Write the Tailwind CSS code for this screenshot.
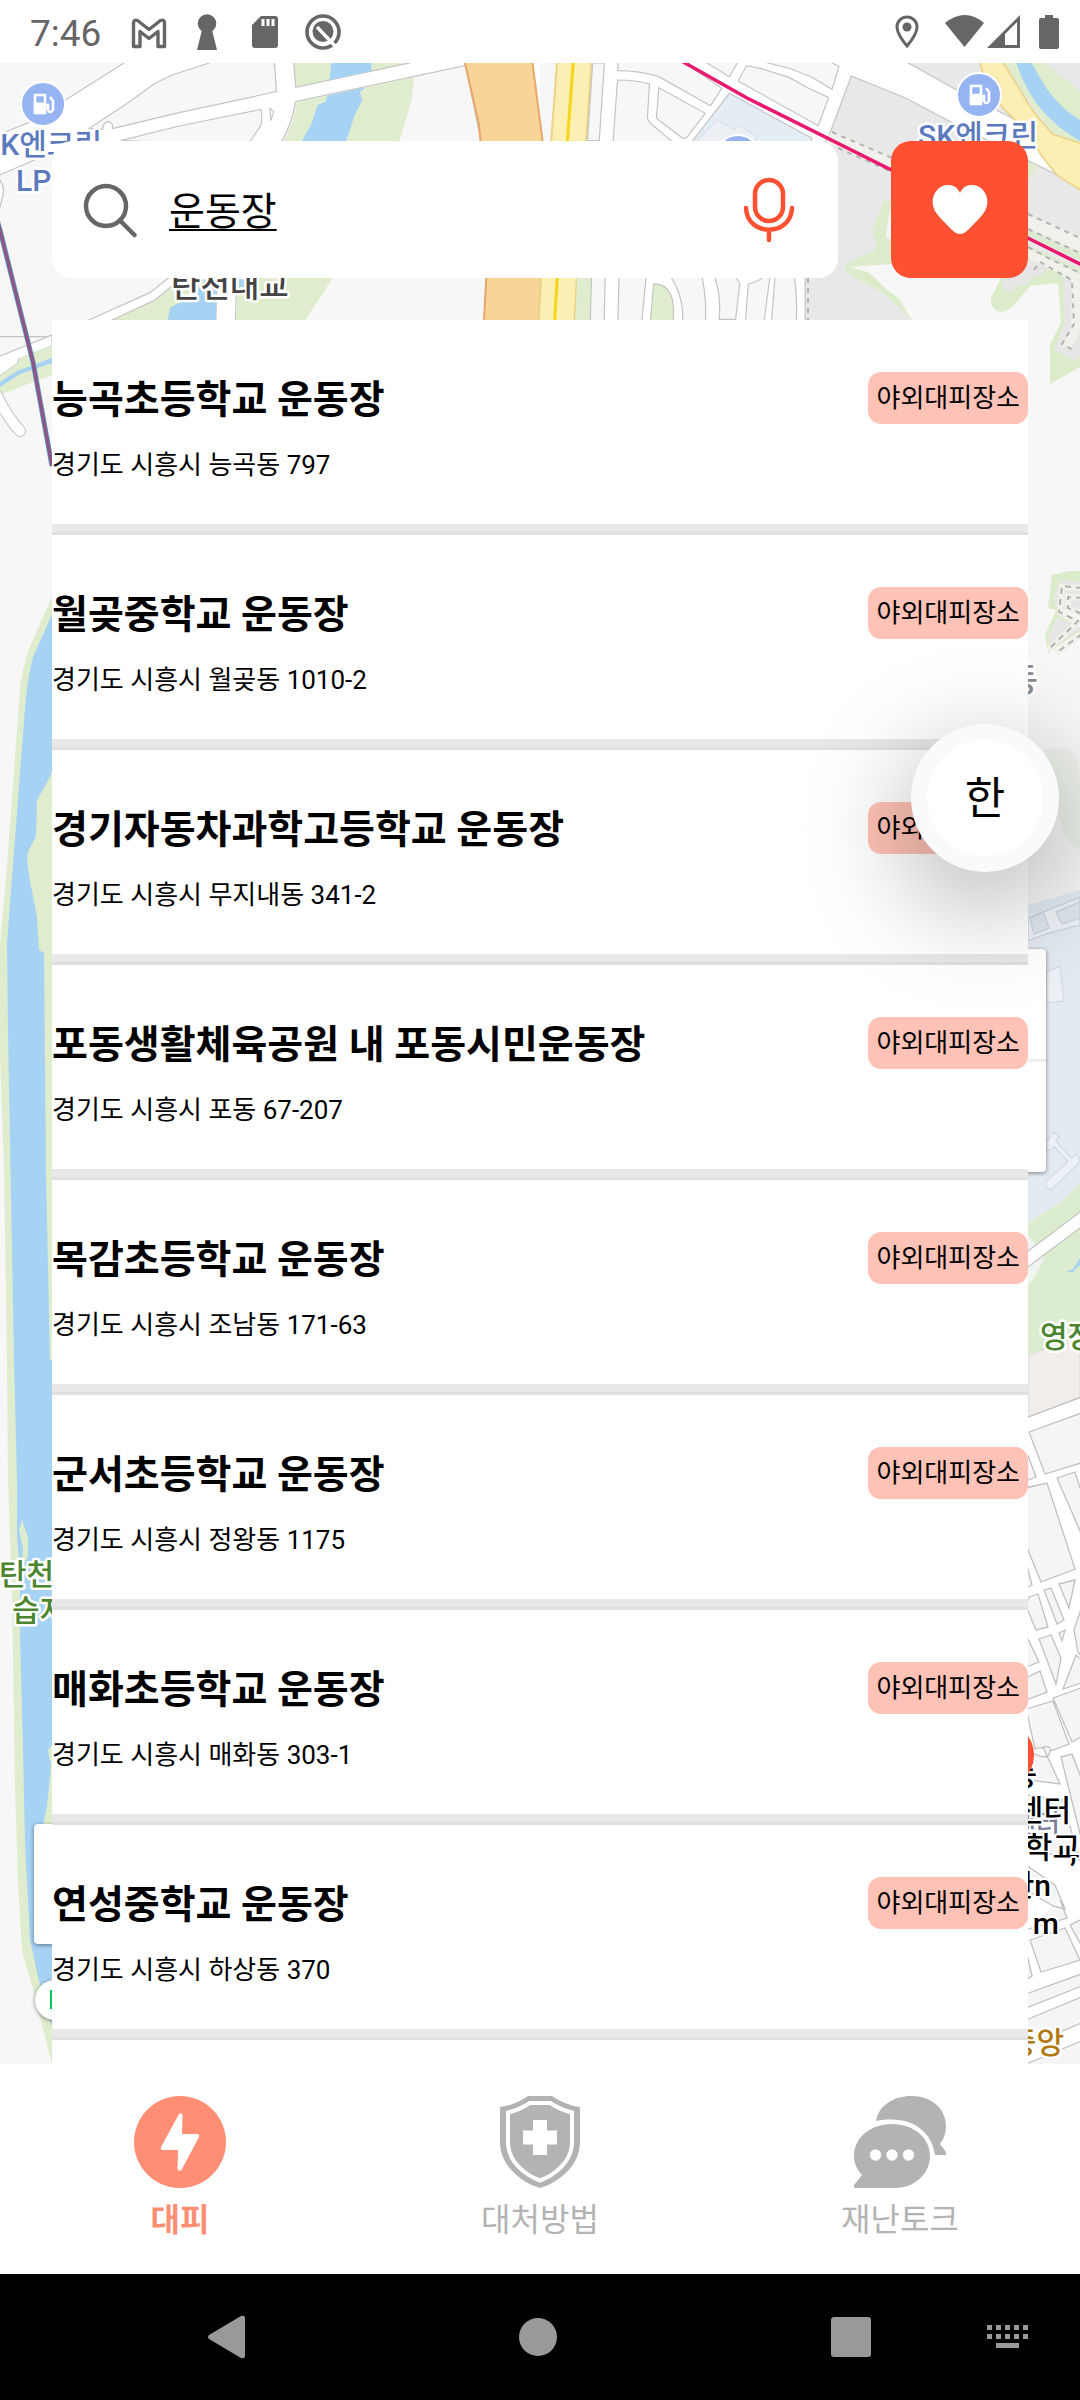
<!DOCTYPE html>
<html lang="ko">
<head>
<meta charset="utf-8">
<meta name="viewport" content="width=device-width, initial-scale=1">
<title>대피</title>
<script src="https://cdn.jsdelivr.net/npm/@tailwindcss/browser@4"></script>
</head>
<body class="flex h-screen flex-col overflow-hidden bg-white font-[Roboto,'Noto_Sans_CJK_KR',sans-serif] text-black">

<!-- Status bar -->
<header class="flex h-[63px] shrink-0 items-center justify-between bg-white pr-[13px] pl-[30px] text-[#666]">
  <div class="flex items-center gap-[22px]">
    <span class="mr-2 pt-1 text-[37px] leading-none">7:46</span>
    <svg class="h-10 w-9" viewBox="0 0 36 40" fill="none" stroke="currentColor" stroke-width="3.400" stroke-linejoin="round"><path d="M2.500 34.500V11Q3 7 6.500 8.500L18 17.500L29.500 8.500Q33.500 7 33.500 11V34.500H27V19.500L18 26.500L9 19.500V34.500Z"/></svg>
    <svg class="h-10 w-9" viewBox="0 0 36 40" fill="currentColor"><circle cx="18" cy="11.500" r="9.300"/><path d="M13 18H23L28 38H8Z"/></svg>
    <svg class="h-10 w-9" viewBox="0 0 36 40" fill="currentColor" fill-rule="evenodd"><path d="M14 4H28Q31 4 31 7V33Q31 36 28 36H8Q5 36 5 33V13ZM14.500 7V14H17.500V7ZM19.500 7V14H22.500V7ZM24.500 7V14H27.500V7Z"/></svg>
    <svg class="h-10 w-9" viewBox="0 0 36 40" fill="none" stroke="currentColor"><circle cx="18" cy="20" r="16" stroke-width="3.600"/><circle cx="18" cy="19.500" r="10.500" fill="currentColor" stroke="none"/><path d="M12 15L31 35" stroke="#fff" stroke-width="3.400"/></svg>
  </div>
  <div class="flex items-center">
    <svg class="mr-5 h-9 w-9" viewBox="0 0 36 36" fill="none" stroke="currentColor" stroke-width="3"><path d="M18 32C13 26 8 19 8 13A10 10 0 0 1 28 13C28 19 23 26 18 32Z"/><circle cx="18" cy="13" r="4.500" fill="currentColor" stroke="none"/></svg>
    <svg class="h-9 w-10" viewBox="0 0 40 36" fill="currentColor"><path d="M0 9Q20 -7 39 9L19.500 33Z"/></svg>
    <svg class="mr-[10px] ml-[2px] h-9 w-[34px]" viewBox="0 0 34 36" fill="currentColor" fill-rule="evenodd"><path d="M0 34L33 1V34ZM18 20V31H30V8Z"/></svg>
    <svg class="h-9 w-9" viewBox="0 0 36 36" fill="currentColor"><path d="M14 1H22V4H26Q28 4 28 6V33Q28 35 26 35H10Q8 35 8 33V6Q8 4 10 4H14Z"/></svg>
  </div>
</header>

<main class="relative flex min-h-0 flex-1 flex-col overflow-hidden bg-[#f7f7f7] px-[52px] pt-[78px]">

  <!-- Map -->
  <svg class="absolute inset-0 h-full w-full" viewBox="0 63 1080 2001" preserveAspectRatio="xMidYMin slice" aria-hidden="true">
    <rect y="63" width="1080" height="2001" fill="#f7f7f7"/>

    <!-- north west -->
    <g transform="scale(.3444 .3333)">
      <rect y="189" width="1568" height="771" fill="#fff"/>
      <g fill="#f7f7f7" stroke="#c4c4c4" stroke-width="3.500">
        <path d="M-9 180H374L190 300L90 365L-9 406Z"/>
        <path d="M634 180L500 225L450 250L370 310L260 385L298 388Q300 365 315 365Q330 368 326 386L520 338L803 275L796 180Z"/>
        <path d="M350 422L520 378L758 328Q764 365 755 380L720 435Z"/>
        <path d="M784 325L795 335L786 362Z"/>
        <path d="M-9 529L100 480L160 455L300 600L520 780V815L482 840L435 878L258 960L170 1010H-9Z"/>
        <path d="M-9 530Q20 560 5 600L-9 660" fill="#fff"/>
        <path d="M852 180L859 262L1230 180Z" fill="#dfedce"/>
        <path d="M858 305L1352 196L1400 440H810Q850 370 858 305Z"/>
        <path d="M325 960L450 900L520 840V780H632L626 970Z" fill="#dfedce"/>
        <path d="M690 780L683 970H1420V780Z"/>
      </g>
      <path d="M862 306L1203 231L1195 300L1155 440H815Q855 370 862 306ZM692 820L685 970H880L975 820Z" fill="#dfedce"/>
      <path d="M962 189L957 240L1078 213V189ZM950 287L1062 262L1045 275L1052 300L1030 345L1000 440H868L905 370L922 315L945 305ZM485 970L495 922L560 890L600 830H628V970ZM694 823H710V860L694 865Z" fill="#a6d2f3"/>
      <path d="M1348 180L1390 370L1395 420L1412 833L1405 970H1566L1572 833L1575 420L1545 180Z" fill="#f8d499" stroke="#e6a86e" stroke-width="6"/>
    </g>

    <!-- north east -->
    <g transform="translate(540) scale(.3444 .3333)">
      <rect x="150" y="189" width="1430" height="771" fill="#fff"/>
      <path d="M50 180L3 833L-4 970H100L107 833L150 180Z" fill="#fcefb4" stroke="#ecd28a" stroke-width="6"/>
      <path d="M97 180L50 833L42 970" fill="none" stroke="#f4d71c" stroke-width="9"/>
      <path d="M108 833H150L145 970H102Z" fill="#dfedce"/>
      <g fill="#f7f7f7" stroke="#c4c4c4" stroke-width="3.500">
        <path d="M153 189L138 422H172L187 189Z"/>
        <path d="M226 180V212Q290 212 345 230L495 317L528 265L410 180Z"/>
        <path d="M225 240Q280 240 318 252L312 350Q312 365 330 378L390 430H212Z"/>
        <path d="M345 263L480 340L428 410Q420 420 410 412L338 355Z"/>
        <path d="M470 180L550 230L578 180Z"/>
        <path d="M600 197L575 243L808 377L838 293L780 265L725 233L640 205Z"/>
        <path d="M640 183L730 207L790 232L848 268L868 200L835 180Z"/>
        <path d="M150 810H190L186 970H146ZM230 810L226 970H295L310 810Z"/>
        <path d="M330 852Q370 850 385 900Q390 940 386 970H320Z" fill="#dfedce"/>
        <path d="M365 810Q420 880 414 970H480Q485 880 465 810ZM500 810Q528 880 520 958H568L580 850L555 810ZM670 810Q640 845 605 852L596 970H650ZM684 810L672 970H744Q748 880 735 810Z"/>
        <path d="M550 280L790 415L780 440H430Z" fill="#e4ecf4"/>
        <path d="M904 228L1060 293L1200 370L1430 488L1600 575V1000H770V780H820V440L838 410Z" fill="#e8e8e8"/>
        <path d="M1050 178L1210 270L1400 370L1600 450V180Z" fill="#e8e8e8"/>
      </g>
      <path d="M515 358L563 390L578 377L632 412L610 430H450Z" fill="#ecf0f5" stroke="#d6dfe8" stroke-width="3"/>
      <path d="M1340 180L1435 325L1490 400L1568 430H1600V300L1455 180Z" fill="#dfedce"/>
      <path d="M1380 180Q1410 280 1470 345Q1520 400 1600 440V375Q1530 350 1470 265L1422 180Z" fill="#a6d2f3"/>
      <path d="M1276 180Q1300 290 1380 360Q1430 420 1455 465L1500 525L1600 590V440L1490 403Q1430 340 1400 280L1340 180Z" fill="#fcefb4" stroke="#ecd28a" stroke-width="5"/>
      <path d="M1420 485L1447 500L1410 550Z" fill="#dfedce"/>
    </g>

    <!-- park and railway -->
    <path d="M895 201H884L872 230L877 245L874 251L850 262Q840 268 850 275L885 294L903 312L923 330H1050V384L1080 367V285L1062 272L1000 260Z" fill="#dcebca"/>
    <path d="M895 206L890 210L886 236L895 244ZM850 267L891 264L1001 264L1001 278L991 298Q990 310 1001 312Q1008 311 1013 306L1030 286L1058 283L1061 322L1050 345L1033 384L1028 392V330H923L909 316L900 300L885 288L870 273Z" fill="#f7f7f7"/>
    <path d="M1063 276L1080 280V354L1076 361L1054 351L1064 322ZM1004 280L1002 288L1009 293L1014 291L1016 285L1024 286L1034 276L1042 275L1050 264L1030 255Z" fill="#e6e6e6"/>
    <path d="M829 136L890 164L1030 222L1084 246" fill="none" stroke="#f2f0ea" stroke-width="13"/>
    <path d="M1026 232L1084 259M1026 248L1084 274" fill="none" stroke="#dcebd0" stroke-width="6"/>
    <path d="M1024 252L1042 260L1076 277V330L1066 348" fill="none" stroke="#f2f0ea" stroke-width="9"/>
    <path d="M832 132L892 158M838 148L890 171M1028 214L1084 240M1028 229L1084 255M1028 247L1050 259L1082 274M1034 270L1040 262L1072 280L1074 324L1062 344L1073 350M808 278V330" fill="none" stroke="#b3b3b3" stroke-width="2" stroke-dasharray="5 5"/>
    <path d="M678 59L747 98L1084 266" fill="none" stroke="#e8196f" stroke-width="3.500"/>

    <!-- west side: stream, river and railway -->
    <path d="M-2 357L52 335V346L19 359L17 364L-2 377Z" fill="#fff" stroke="#c4c4c4" stroke-width="1.200"/>
    <path d="M0 376L17 364L20 358L52 346V375L20 387L0 395Z" fill="#dfedce"/>
    <path d="M0 382L17 371L52 358V363L20 374L0 387Z" fill="#a6d2f3"/>
    <path d="M-3 396Q8 418 20 431" fill="none" stroke="#c4c4c4" stroke-width="12" stroke-linecap="round"/>
    <path d="M-3 396Q8 418 20 431" fill="none" stroke="#fff" stroke-width="10" stroke-linecap="round"/>
    <path d="M-3 220L0 230L24 326L33 362L52 466" fill="none" stroke="#5f9dc0" stroke-width="5"/>
    <path d="M-3 220L0 230L24 326L33 362L52 466" fill="none" stroke="#8a5788" stroke-width="3.500"/>
    <path d="M54 592L29 649Q22 670 20 688L7 866L0 945V1055L4 1172L7 1360L8 1480L12 1595L15 1786L18 1882L22 1951L33 1989L52 2064H56Z" fill="#dfedce"/>
    <path d="M54 610L33 657Q27 680 25 708L7 943L8 1034L14 1360L17 1480L17 1537L20 1570V1633L23 1748L25 1844L30 1939L38 1977L54 2034V1360H50L46 1172L44 953L39 950L37 917L30 881Q26 858 28 852L36 836L37 800L50 777L54 765Z" fill="#a6d2f3"/>
    <path d="M22 1520L28 1537V1557L22 1565L23 1548L19 1530ZM54 1742L48 1750L51 1765L47 1807L43 1825H54Z" fill="#dfedce"/>

    <!-- east side: hills, campus, park -->
    <g>
      <path d="M1052 575L1068 571H1082V590L1060 615L1082 630L1048 653L1045 635L1056 610L1048 608Z" fill="#dcebca"/>
      <path d="M1054 595L1060 580L1082 582V610L1055 606ZM1048 636L1057 618L1082 628L1052 648Z" fill="#e6e6e6"/>
      <path d="M1082 588L1062 587L1060 612L1078 622L1048 650M1082 598L1068 597V608L1082 614M1082 634L1056 653" fill="none" stroke="#f2f0ea" stroke-width="6"/>
      <path d="M1082 588L1062 586L1059 612L1078 621L1048 650M1082 598L1068 597V608L1082 614M1082 634L1056 653" fill="none" stroke="#b0b0b0" stroke-width="2" stroke-dasharray="6 5"/>
      <path d="M1045 750Q1070 745 1077 758L1080 780V850Q1062 840 1060 820Z" fill="#edf2ea"/>
      <path d="M1028 905L1080 890V1183L1060 1203L1028 1223Z" fill="#e2eaf2"/>
      <path d="M1028 918L1080 897V925L1046 934L1028 941Z" fill="#eef2f6" stroke="#cfd7df" stroke-width="1.500"/>
      <path d="M1030 918L1043 912L1049 928L1034 934ZM1056 912L1080 902V918L1062 924Z" fill="#dfe7ef" stroke="#cfd7df" stroke-width="1.500"/>
      <path d="M1046 972L1060 966L1064 1001L1046 1003ZM1046 1142L1054 1132L1059 1137L1056 1141L1071 1158L1077 1154L1080 1162L1051 1190L1046 1187V1181L1068 1162L1055 1147L1046 1152Z" fill="#edf1f5" stroke="#d5dde5" stroke-width="1.500"/>
      <path d="M1028 1223L1060 1203L1082 1181V1340L1028 1356Z" fill="#dcedcf"/>
      <path d="M1028 1235Q1040 1250 1044 1257Q1038 1275 1028 1285Z" fill="#f1f4f0"/>
      <path d="M1020 1265L1084 1217" stroke="#c4c4c4" stroke-width="14"/>
      <path d="M1020 1265L1084 1217" stroke="#fff" stroke-width="11.500"/>
      <path d="M1066 1272L1073 1269L1080 1258V1265L1073 1272Z" fill="#a6d2f3"/>
      <path d="M1028 1356L1080 1335V1398L1028 1418Z" fill="#f1edea" stroke="#ddd8d2" stroke-width="1"/>
      <path d="M1028 1418L1080 1398V2064H1028Z" fill="#fff"/>
    </g>
    <g fill="#f5f5f5" stroke="#c0c0c0" stroke-width="1.300">
      <path d="M1020 1420L1084 1396"/>
      <path d="M1029 1432L1084 1412V1462L1045 1474ZM1026 1450L1036 1477L1026 1481ZM1026 1488L1044 1484L1050 1500"/>
      <path d="M1026 1488L1047 1483L1075 1569L1041 1582L1026 1545ZM1057 1478L1075 1472L1084 1500V1540Z"/>
      <path d="M1026 1562L1032 1585L1026 1588ZM1029 1597L1038 1594L1048 1627L1036 1630L1026 1606ZM1044 1590L1051 1588L1064 1620L1057 1624ZM1059 1584L1075 1580L1069 1608ZM1039 1639L1051 1635L1061 1658L1056 1684ZM1059 1633L1065 1630L1062 1641ZM1026 1635L1039 1662L1026 1667ZM1026 1678L1040 1671L1047 1692L1026 1700Z"/>
      <path d="M1084 1600L1074 1630L1078 1652L1084 1660ZM1084 1662L1076 1655L1063 1689L1084 1682Z"/>
      <path d="M1026 1709L1053 1701L1069 1744L1050 1751Q1040 1746 1035 1749ZM1053 1698L1084 1687V1735L1072 1742Z"/>
      <path d="M1033 1753Q1048 1761 1050 1752Q1052 1745 1043 1747L1060 1784L1028 1780ZM1061 1757L1072 1754L1084 1785V1850ZM1026 1795L1062 1800L1080 1860L1030 1850Z"/>
      <path d="M1026 1865L1055 1885L1065 1909L1053 1906L1026 1890ZM1026 1930L1067 1918L1060 1900M1030 1940L1065 1928L1080 1960L1041 1972ZM1070 1925L1084 1918V1950Z"/>
      <path d="M1026 1950L1032 1976L1026 1980ZM1026 1994L1084 1973V1985L1026 2008ZM1026 2020L1084 1996V2022L1026 2046ZM1026 2064L1084 2040V2070H1026Z"/>
    </g>

    <!-- map cards -->
    <g style="filter:drop-shadow(0 1px 2px #0007)">
      <rect x="900" y="949" width="146" height="223" rx="4" fill="#fff"/>
      <rect x="34" y="1824" width="120" height="120" rx="4" fill="#fff"/>
      <circle cx="55" cy="2000" r="20" fill="#fff"/>
    </g>
    <path d="M900 1060.500H1046" stroke="#eee" stroke-width="3"/>
    <rect x="50" y="1990" width="10" height="19" fill="#03c75a"/>

    <!-- fuel stations -->
    <g stroke="#fff" stroke-width="2" fill="#97b4f2">
      <circle cx="43" cy="104" r="22"/><circle cx="979" cy="95" r="22"/><circle cx="738" cy="157" r="22"/>
    </g>
    <g fill="none" stroke="#fff" stroke-width="2.500">
      <path d="M35 113V95H45V113M35 104H45M50 97L53 101V110Q50 114 48 110V105H45"/><path d="M35 104H45V113H35Z" fill="#fff"/>
      <path d="M971 104V86H981V104M986 88L989 92V101Q986 105 984 101V96H981"/><path d="M971 95H981V104H971Z" fill="#fff"/>
    </g>

    <!-- place names -->
    <g font-size="30" font-weight="500" stroke="#fff" stroke-width="5" stroke-linejoin="round" paint-order="stroke">
      <g fill="#5d79bd">
        <text x="102" y="155" text-anchor="end">SK엔크린</text>
        <text x="16" y="191">LPG</text>
        <text x="1038" y="146" text-anchor="end">SK엔크린</text>
      </g>
      <text x="171" y="297" font-size="32" fill="#444">탄천대교</text>
      <g fill="#4c8530">
        <text x="-1" y="1585">탄천</text>
        <text x="12" y="1621">습지</text>
        <text x="1040" y="1347">영장</text>
      </g>
      <text x="1038" y="692" font-size="34" fill="#8c8c8c" text-anchor="end">동</text>
      <text x="1060" y="1833" font-size="26" fill="#7a8099" text-anchor="end">센터</text>
      <g fill="#000" stroke-width="4">
        <text x="1037" y="1785" text-anchor="end">동</text>
        <text x="1071" y="1821" text-anchor="end">센터</text>
        <text x="1080" y="1858" text-anchor="end">학교</text>
        <text x="1070" y="1861">,</text>
        <text x="1051" y="1896" text-anchor="end">한n</text>
        <text x="1059" y="1934" text-anchor="end">m</text>
      </g>
      <text x="1064" y="2053" fill="#b07a10" text-anchor="end">중앙</text>
    </g>
    <circle cx="1001" cy="1755" r="33" fill="#ff5032"/>
  </svg>

  <!-- Search -->
  <div class="relative flex h-[137px] shrink-0 gap-[53px]">
    <form class="flex min-w-0 flex-1 items-center rounded-[20px] bg-white pr-[43px] pl-[30px]">
      <svg class="h-14 w-14 shrink-0" viewBox="0 0 56 56" fill="none" stroke="#666" stroke-width="4.500" stroke-linecap="round"><circle cx="24" cy="24" r="20"/><path d="M38 38.500L52.500 53"/></svg>
      <input class="ml-[31px] min-w-0 flex-1 bg-transparent pt-1 text-[39px] leading-[56px] text-black underline decoration-2 underline-offset-4 outline-none [text-decoration-skip-ink:none]" type="text" value="운동장" aria-label="장소 검색">
      <button class="shrink-0" type="button" aria-label="음성 검색">
        <svg class="h-[66px] w-[52px]" viewBox="0 0 52 66" fill="none" stroke="#ff5032" stroke-width="4.500" stroke-linecap="round"><rect x="12" y="3" width="28" height="41" rx="14"/><path d="M3 31C4 60 48 60 49 31M26 54V63"/></svg>
      </button>
    </form>
    <button class="flex w-[137px] shrink-0 items-center justify-center rounded-[20px] bg-[#ff5032]" type="button" aria-label="즐겨찾기">
      <svg class="h-[50px] w-14" viewBox="0 0 56 50" fill="#fff"><path d="M28 8C32 -2 44 -2 50 4C57 11 57 21 51 29C47 34 41 40 36 45Q28 53 20 45C15 40 9 34 5 29C-1 21 -1 11 6 4C12 -2 24 -2 28 8Z"/></svg>
    </button>
  </div>

  <!-- Results -->
  <ul class="relative mt-[42px] min-h-0 flex-1 overflow-y-auto bg-white [scrollbar-width:none]">
    <li class="border-b-[3px] border-[#e0e0e0]"><div class="border-b-8 border-[#e8e8e8] pt-[52px] pb-[39px]">
      <div class="flex h-[52px] items-center justify-between"><h2 class="pt-1 text-[39px] leading-[52px] font-bold">능곡초등학교 운동장</h2><span class="rounded-[13px] bg-[#ffc2b6] px-2 text-[26px] leading-[52px]">야외대피장소</span></div>
      <p class="mt-[21px] text-[26px] leading-10">경기도 시흥시 능곡동 797</p>
    </div></li>
    <li class="border-b-[3px] border-[#e0e0e0]"><div class="border-b-8 border-[#e8e8e8] pt-[52px] pb-[39px]">
      <div class="flex h-[52px] items-center justify-between"><h2 class="pt-1 text-[39px] leading-[52px] font-bold">월곶중학교 운동장</h2><span class="rounded-[13px] bg-[#ffc2b6] px-2 text-[26px] leading-[52px]">야외대피장소</span></div>
      <p class="mt-[21px] text-[26px] leading-10">경기도 시흥시 월곶동 1010-2</p>
    </div></li>
    <li class="border-b-[3px] border-[#e0e0e0]"><div class="border-b-8 border-[#e8e8e8] pt-[52px] pb-[39px]">
      <div class="flex h-[52px] items-center justify-between"><h2 class="pt-1 text-[39px] leading-[52px] font-bold">경기자동차과학고등학교 운동장</h2><span class="rounded-[13px] bg-[#ffc2b6] px-2 text-[26px] leading-[52px]">야외대피장소</span></div>
      <p class="mt-[21px] text-[26px] leading-10">경기도 시흥시 무지내동 341-2</p>
    </div></li>
    <li class="border-b-[3px] border-[#e0e0e0]"><div class="border-b-8 border-[#e8e8e8] pt-[52px] pb-[39px]">
      <div class="flex h-[52px] items-center justify-between"><h2 class="pt-1 text-[39px] leading-[52px] font-bold">포동생활체육공원 내 포동시민운동장</h2><span class="rounded-[13px] bg-[#ffc2b6] px-2 text-[26px] leading-[52px]">야외대피장소</span></div>
      <p class="mt-[21px] text-[26px] leading-10">경기도 시흥시 포동 67-207</p>
    </div></li>
    <li class="border-b-[3px] border-[#e0e0e0]"><div class="border-b-8 border-[#e8e8e8] pt-[52px] pb-[39px]">
      <div class="flex h-[52px] items-center justify-between"><h2 class="pt-1 text-[39px] leading-[52px] font-bold">목감초등학교 운동장</h2><span class="rounded-[13px] bg-[#ffc2b6] px-2 text-[26px] leading-[52px]">야외대피장소</span></div>
      <p class="mt-[21px] text-[26px] leading-10">경기도 시흥시 조남동 171-63</p>
    </div></li>
    <li class="border-b-[3px] border-[#e0e0e0]"><div class="border-b-8 border-[#e8e8e8] pt-[52px] pb-[39px]">
      <div class="flex h-[52px] items-center justify-between"><h2 class="pt-1 text-[39px] leading-[52px] font-bold">군서초등학교 운동장</h2><span class="rounded-[13px] bg-[#ffc2b6] px-2 text-[26px] leading-[52px]">야외대피장소</span></div>
      <p class="mt-[21px] text-[26px] leading-10">경기도 시흥시 정왕동 1175</p>
    </div></li>
    <li class="border-b-[3px] border-[#e0e0e0]"><div class="border-b-8 border-[#e8e8e8] pt-[52px] pb-[39px]">
      <div class="flex h-[52px] items-center justify-between"><h2 class="pt-1 text-[39px] leading-[52px] font-bold">매화초등학교 운동장</h2><span class="rounded-[13px] bg-[#ffc2b6] px-2 text-[26px] leading-[52px]">야외대피장소</span></div>
      <p class="mt-[21px] text-[26px] leading-10">경기도 시흥시 매화동 303-1</p>
    </div></li>
    <li class="border-b-[3px] border-[#e0e0e0]"><div class="border-b-8 border-[#e8e8e8] pt-[52px] pb-[39px]">
      <div class="flex h-[52px] items-center justify-between"><h2 class="pt-1 text-[39px] leading-[52px] font-bold">연성중학교 운동장</h2><span class="rounded-[13px] bg-[#ffc2b6] px-2 text-[26px] leading-[52px]">야외대피장소</span></div>
      <p class="mt-[21px] text-[26px] leading-10">경기도 시흥시 하상동 370</p>
    </div></li>
  </ul>

  <!-- Floating keyboard language key -->
  <button class="absolute top-[661px] right-[21px] flex h-[148px] w-[148px] items-center justify-center rounded-full bg-[#f8fafc] shadow-[0_30px_100px_12px_rgba(0,0,0,0.25)]" type="button">
    <span class="flex h-[116px] w-[116px] items-center justify-center rounded-full bg-white pt-[2px] text-[44px] leading-none">한</span>
  </button>
</main>

<!-- Tabs -->
<nav class="grid h-[210px] shrink-0 grid-cols-3 bg-white pt-8 text-[32px] leading-[64px] text-[#b3b3b3]">
  <a class="flex flex-col items-center font-bold text-[#ff8e74]" href="#shelter">
    <svg class="h-[92px] w-[92px]" viewBox="0 0 92 92"><circle cx="46" cy="46" r="46" fill="currentColor"/><path d="M45 18Q48 16 48.500 19L48 38H63Q66 38 65 41L47.500 74Q44 76 43.500 73L44 54H28Q26 53 27 51Z" fill="#fff"/></svg>
    대피
  </a>
  <a class="flex flex-col items-center" href="#guide">
    <svg class="h-[92px] w-20" viewBox="0 0 80 92" fill="currentColor"><path d="M28 0H52Q65 9 80 11V46C80 72 55 88 40 92C25 88 0 72 0 46V11Q15 9 28 0Z"/><path d="M30 7H50Q61 14 72 16.500V48C71 67 53 80 40 84.500C27 80 9 67 8 48V16.500Q19 14 30 7Z" fill="none" stroke="#fff" stroke-width="4"/><path d="M33 24H47V34.500H57V48.500H47V59H33V48.500H23V34.500H33Z" fill="#fff"/></svg>
    대처방법
  </a>
  <a class="flex flex-col items-center" href="#talk">
    <svg class="h-[92px] w-[92px]" viewBox="0 0 92 92" fill="currentColor"><path d="M22 25C25 9 40 0 57 0C78 0 92 13 92 30Q92 40 86 48L92 56V59H81C78 36 58 18 22 25Z"/><path d="M38 28C60 28 76 42 76 60C76 78 60 92 42 92H0V89L8 79Q0 71 0 60C0 42 16 28 38 28Z"/><g fill="#fff"><circle cx="21.500" cy="59" r="5.700"/><circle cx="38" cy="59" r="5.700"/><circle cx="54.500" cy="59" r="5.700"/></g></svg>
    재난토크
  </a>
</nav>

<!-- System navigation -->
<footer class="flex h-[126px] shrink-0 items-center bg-black pr-[52px] text-[#999]">
  <button class="ml-[20%]" type="button" aria-label="뒤로"><svg class="h-11 w-10" viewBox="0 0 40 44" fill="currentColor"><path d="M3 20Q1 22 3 24L35 43Q39 44 39 41V3Q39 0 35 1Z"/></svg></button>
  <button class="mx-auto" type="button" aria-label="홈"><svg class="h-10 w-10" viewBox="0 0 40 40" fill="currentColor"><circle cx="20" cy="20" r="19"/></svg></button>
  <button type="button" aria-label="최근 앱"><svg class="h-10 w-10" viewBox="0 0 40 40" fill="currentColor"><rect width="40" height="40" rx="3"/></svg></button>
  <button class="ml-[116px]" type="button" aria-label="키보드"><svg class="h-6 w-[41px]" viewBox="0 0 41 24" fill="currentColor"><path d="M0 0H5V5H0ZM9 0H14V5H9ZM18 0H23V5H18ZM27 0H32V5H27ZM36 0H41V5H36ZM0 9H5V14H0ZM9 9H14V14H9ZM18 9H23V14H18ZM27 9H32V14H27ZM36 9H41V14H36ZM9 18H32V23H9Z"/></svg></button>
</footer>
</body>
</html>
